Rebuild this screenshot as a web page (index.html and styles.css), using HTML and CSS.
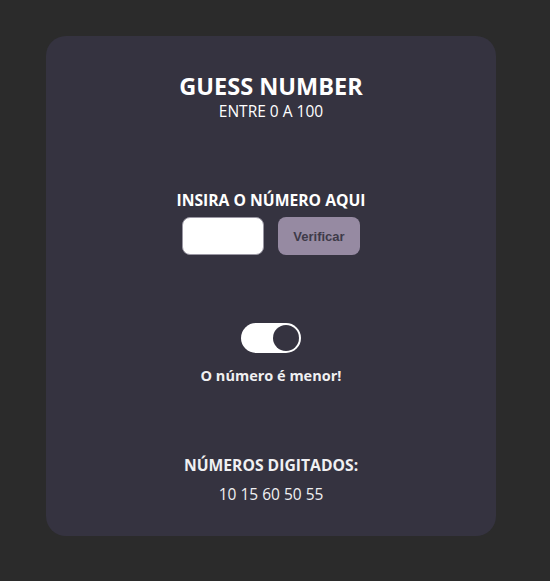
FILE: index.html
```html
<!DOCTYPE html>
<html lang="pt">
<head>
<meta charset="utf-8">
<title>Guess Number</title>
<link rel="stylesheet" href="styles.css">
</head>
<body>
<main class="card">
  <header class="head">
    <h1 class="title">GUESS NUMBER</h1>
    <p class="subtitle">ENTRE 0 A 100</p>
  </header>
  <section class="entry">
    <label class="label" for="guess">INSIRA O NÚMERO AQUI</label>
    <div class="controls">
      <input id="guess" class="input" type="text">
      <button class="btn" type="button">Verificar</button>
    </div>
  </section>
  <section class="result">
    <div class="toggle"><span class="knob"></span></div>
    <p class="message">O número é menor!</p>
  </section>
  <section class="history">
    <h2 class="history-title">NÚMEROS DIGITADOS:</h2>
    <p class="numbers">10 15 60 50 55</p>
  </section>
</main>
</body>
</html>
```
FILE: styles.css
```css
html, body {
  margin: 0;
  padding: 0;
  background: #2b2b2b;
  height: 100%;
}
body {
  font-family: "Open Sans", "Noto Sans", sans-serif;
  color: #ffffff;
  padding-top: 36px;
  padding-left: 46px;
  box-sizing: border-box;
}
.card {
  width: 450px;
  height: 500px;
  box-sizing: border-box;
  background: #353340;
  border-radius: 20px;
  display: flex;
  flex-direction: column;
  align-items: center;
  padding-top: 36px;
}
.head {
  display: flex;
  flex-direction: column;
  align-items: center;
}
.title {
  margin: 0;
  font-size: 23.5px;
  font-weight: 700;
  line-height: 28px;
}
.subtitle {
  margin: 0;
  font-size: 15.5px;
  line-height: 22px;
}
.entry {
  margin-top: 68px;
  display: flex;
  flex-direction: column;
  align-items: center;
}
.label {
  font-size: 15.7px;
  font-weight: 700;
  line-height: 20px;
}
.controls {
  margin-top: 7px;
  display: flex;
  gap: 14px;
}
.input {
  width: 82px;
  height: 38px;
  box-sizing: border-box;
  border: 1px solid #9a97a3;
  border-radius: 8px;
  background: #ffffff;
  padding: 0 8px;
}
.btn {
  width: 82px;
  height: 38px;
  box-sizing: border-box;
  border: none;
  border-radius: 8px;
  background: #968aa2;
  color: #3e3a49;
  font-family: "Liberation Sans", Arial, sans-serif;
  font-size: 13px;
  font-weight: 700;
}
.result {
  margin-top: 68px;
  display: flex;
  flex-direction: column;
  align-items: center;
}
.toggle {
  width: 60px;
  height: 30px;
  box-sizing: border-box;
  background: #ffffff;
  border-radius: 15px;
  display: flex;
  justify-content: flex-end;
  align-items: center;
  padding: 2px;
}
.knob {
  width: 26px;
  height: 26px;
  border-radius: 50%;
  background: #353340;
}
.message {
  margin: 13px 0 0;
  font-size: 14.5px;
  font-weight: 700;
  line-height: 20px;
  color: #f0f0f2;
}
.history {
  margin-top: 69px;
  display: flex;
  flex-direction: column;
  align-items: center;
}
.history-title {
  margin: 0;
  font-size: 15.7px;
  font-weight: 700;
  line-height: 20px;
  color: #f0f0f2;
}
.numbers {
  margin: 9px 0 0;
  font-size: 15.5px;
  line-height: 20px;
  color: #f0f0f2;
}
```
